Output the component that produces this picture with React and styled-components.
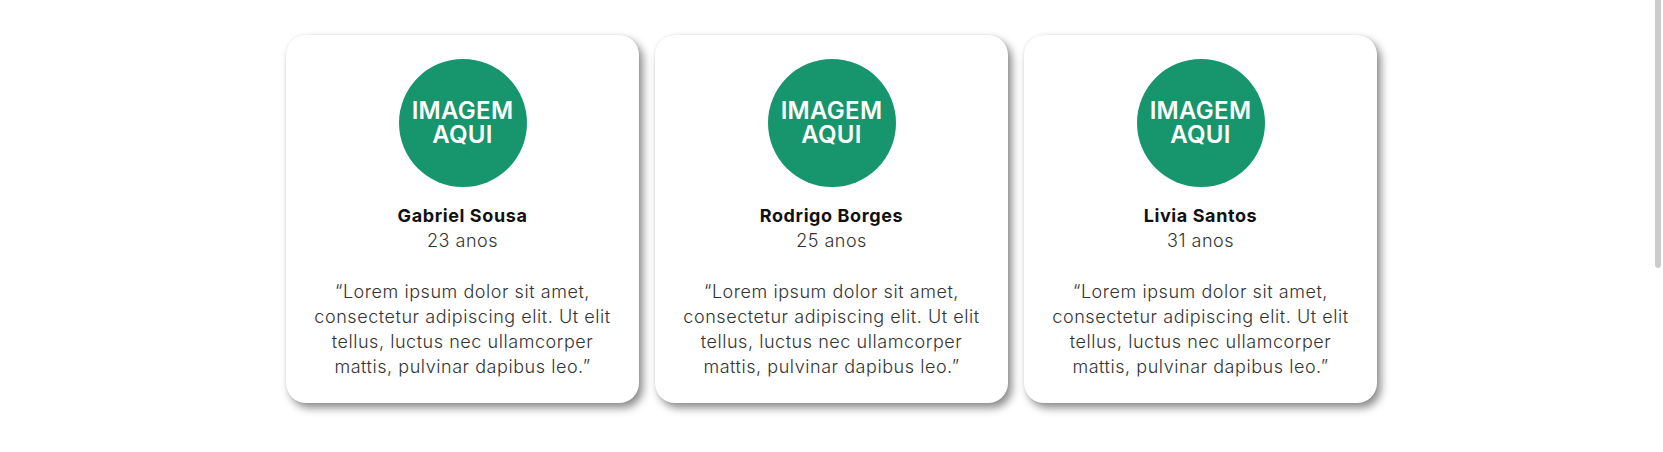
import React from "react";
import styled, { createGlobalStyle } from "styled-components";

const GlobalStyle = createGlobalStyle`
  html, body {
    margin: 0;
    padding: 0;
    background: #ffffff;
  }

  body {
    font-family: "Inter", "Open Sans", sans-serif;
  }
`;

const Section = styled.section`
  display: flex;
  justify-content: center;
  align-items: flex-start;
  gap: 16px;
  min-height: 762px;
  box-sizing: border-box;
  padding-top: 35px;
`;

// the page's thin custom scrollbar thumb
const ScrollThumb = styled.div`
  position: fixed;
  top: 0;
  right: 2px;
  width: 6px;
  height: 268px;
  background: #cccccc;
  border-radius: 0 0 3px 3px;
`;

const Card = styled.div`
  display: flex;
  flex-direction: column;
  align-items: center;
  width: 353px;
  box-sizing: border-box;
  padding: 24px 16px;
  background: #ffffff;
  border-radius: 20px;
  box-shadow: 4px 5px 8px rgba(0, 0, 0, 0.45), 0 0 3px rgba(0, 0, 0, 0.08);
`;

const Avatar = styled.div`
  display: flex;
  align-items: center;
  justify-content: center;
  width: 128px;
  height: 128px;
  border-radius: 50%;
  background: #17956d;
  color: #ffffff;
  font-size: 24px;
  font-weight: 600;
  line-height: 24px;
  letter-spacing: 0.3px;
  text-align: center;
  margin-bottom: 16px;
`;

const Name = styled.h3`
  margin: 0;
  font-size: 18px;
  font-weight: 700;
  line-height: 25px;
  letter-spacing: 0.6px;
  color: #111111;
`;

const Age = styled.span`
  font-size: 18px;
  font-weight: 300;
  line-height: 25px;
  letter-spacing: 0.5px;
  color: #333333;
  margin-bottom: 26px;
`;

const Quote = styled.p`
  margin: 0;
  font-size: 18px;
  font-weight: 300;
  line-height: 25px;
  letter-spacing: 0.55px;
  color: #333333;
  text-align: center;
  white-space: nowrap;
`;

const people = [
  { name: "Gabriel Sousa", age: 23 },
  { name: "Rodrigo Borges", age: 25 },
  { name: "Livia Santos", age: 31 },
];

const App = () => {
  return (
    <>
      <GlobalStyle />
      <Section>
        {people.map((p) => (
          <Card key={p.name}>
            <Avatar>
              IMAGEM
              <br />
              AQUI
            </Avatar>
            <Name>{p.name}</Name>
            <Age>{p.age} anos</Age>
            <Quote>
              “Lorem ipsum dolor sit amet,
              <br />
              consectetur adipiscing elit. Ut elit
              <br />
              tellus, luctus nec ullamcorper
              <br />
              mattis, pulvinar dapibus leo.”
            </Quote>
          </Card>
        ))}
      </Section>
      <ScrollThumb />
    </>
  );
};

export default App;
